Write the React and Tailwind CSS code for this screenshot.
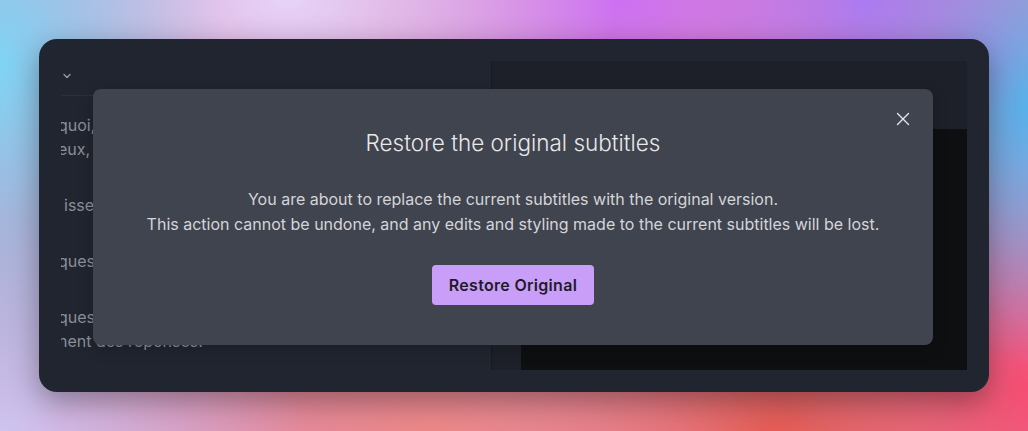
import { ChevronDown, X } from 'lucide-react';

const paragraphs = [
  ['quoi, comment et pourquoi les choses', 'eux, les idées qui changent le monde'],
  ['isse en avant les nouvelles découvertes'],
  ['ques et des histoires racontées'],
  ['ques qui posent les bonnes questions', 'nent des réponses.'],
];

export default function App() {
  return (
    <div className="w-[1028px] h-[431px] p-[39px] font-['Inter',sans-serif] bg-[#d98cb8] bg-[radial-gradient(ellipse_22%_85%_at_0%_15%,#7fd4f5_0%,transparent_100%),radial-gradient(ellipse_32%_45%_at_28%_0%,#e6d3f9_0%,transparent_100%),radial-gradient(ellipse_28%_45%_at_60%_0%,#cd70f3_0%,transparent_100%),radial-gradient(ellipse_18%_40%_at_84%_0%,#a47cf0_0%,transparent_100%),radial-gradient(ellipse_18%_60%_at_100%_25%,#58b0ea_0%,transparent_100%),radial-gradient(ellipse_30%_50%_at_0%_100%,#cfc4f0_0%,transparent_100%),radial-gradient(ellipse_35%_45%_at_42%_100%,#ee8888_0%,transparent_100%),radial-gradient(ellipse_30%_45%_at_75%_100%,#e65a52_0%,transparent_100%),radial-gradient(ellipse_20%_55%_at_100%_90%,#f84b78_0%,transparent_100%)]">
      <div className="relative flex h-[353px] w-[950px] rounded-[18px] bg-[#21252f] p-[22px] shadow-[0_10px_30px_rgba(0,0,0,0.35)]">
        {/* Left: transcript */}
        <div className="flex w-[430px] flex-col overflow-hidden">
          <div className="h-[35px] shrink-0 border-b border-[#2c303a] pt-[9px] text-[#9a9ea6]">
            <ChevronDown size={12} strokeWidth={2.5} />
          </div>
          <div className="ml-[-3px] pt-[17px] text-base leading-6 text-[#8b8f98] whitespace-nowrap">
            {paragraphs.map((lines, i) => (
              <div key={i} className={i === 1 ? 'mb-8 pl-[6px]' : 'mb-8'}>
                {lines.map((l) => (
                  <div key={l}>{l}</div>
                ))}
              </div>
            ))}
          </div>
        </div>

        {/* Right: video preview */}
        <div className="flex flex-1 flex-col border-l border-[#17191e] bg-[#1e2029]">
          <div className="h-[68px] shrink-0" />
          <div className="flex-1 pl-[29px]">
            <div className="h-full bg-[#0e0f11]" />
          </div>
        </div>

        {/* Modal */}
        <div className="absolute left-[54px] top-[50px] flex h-[256px] w-[840px] flex-col items-center rounded-lg bg-[#40444e] pt-[38px] shadow-[0_4px_16px_rgba(0,0,0,0.2)]">
          <button className="absolute right-[19px] top-[19px] text-[#e4e5e8]">
            <X size={22} strokeWidth={1.5} />
          </button>
          <h2 className="text-[22.5px] leading-8 font-light text-[#e8e9ec]">
            Restore the original subtitles
          </h2>
          <p className="mt-[28px] text-center text-base leading-[25px] text-[#d4d5d9]">
            You are about to replace the current subtitles with the original version.
            <br />
            This action cannot be undone, and any edits and styling made to the current subtitles will be lost.
          </p>
          <button className="mt-[28px] h-10 rounded-sm bg-[#c99ef8] px-[17px] text-base font-semibold tracking-[0.3px] text-[#1f1b2b]">
            Restore Original
          </button>
        </div>
      </div>
    </div>
  );
}
